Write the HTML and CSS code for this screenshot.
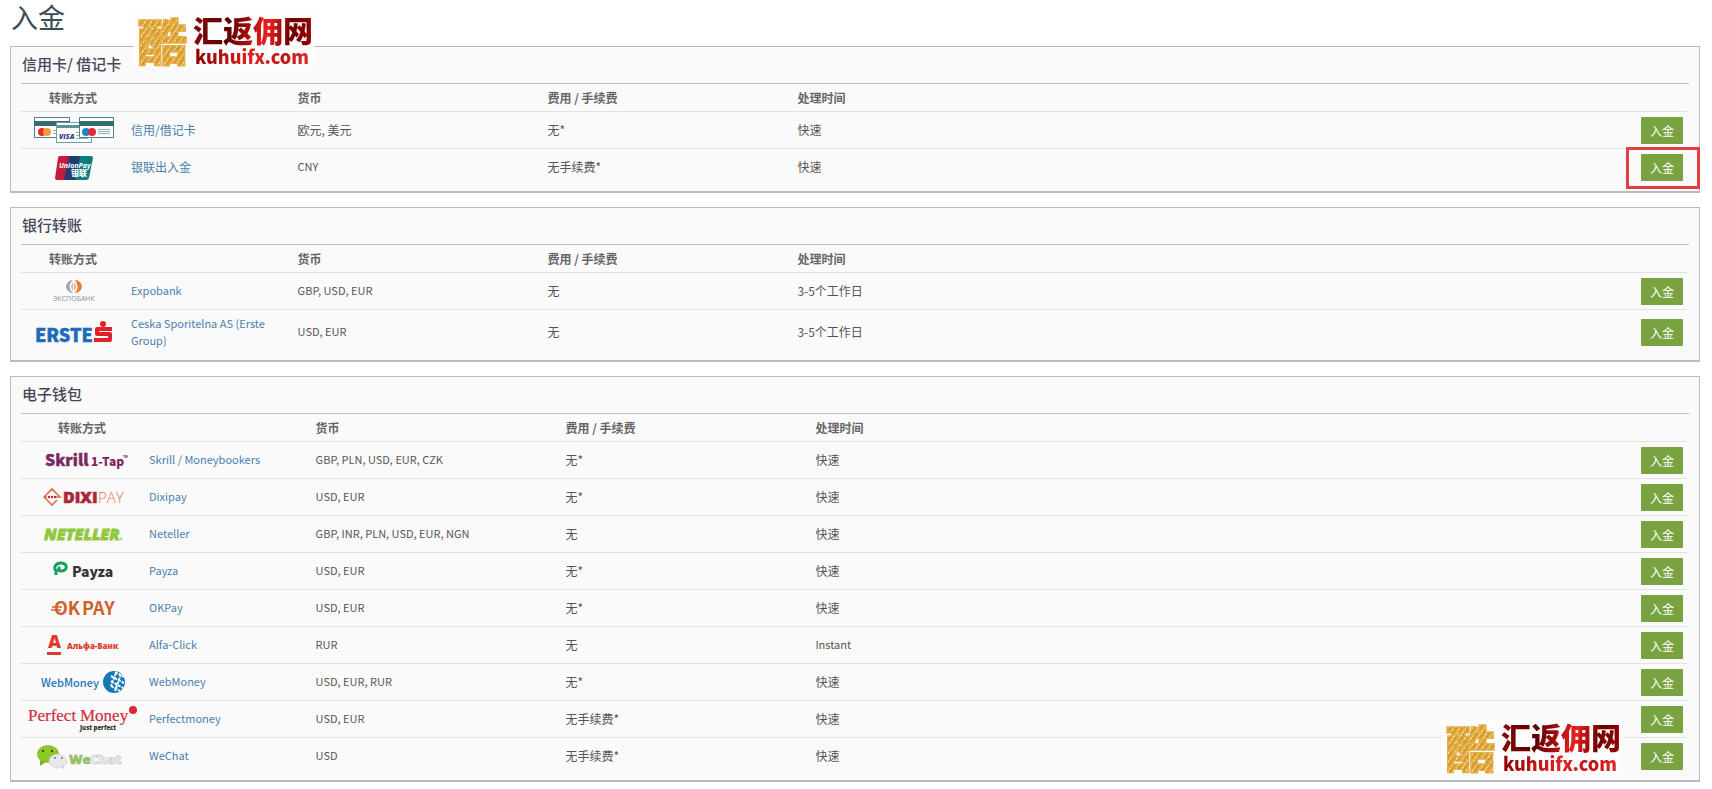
FILE: index.html
```html
<!DOCTYPE html>
<html lang="zh-CN">
<head>
<meta charset="utf-8">
<title>入金</title>
<link rel="stylesheet" href="styles.css">
</head>
<body>
<main class="page">
<h1 class="page-title">入金</h1>

<div class="brand brand-top"><span class="brand-seal">酷</span><span class="brand-words"><span class="brand-name">汇返佣网</span><span class="brand-site">kuhuifx.com</span></span></div>

<section class="panel">
<h2 class="panel-title">信用卡/ 借记卡</h2>
<table class="methods">
<thead><tr><th class="col-logo">转账方式</th><th class="col-name"></th><th class="col-mid">货币</th><th class="col-mid">费用 / 手续费</th><th>处理时间</th><th class="col-action"></th></tr></thead>
<tbody>
<tr><td class="logo"><svg width="80" height="26" viewBox="0 0 80 26"><g fill="#fff" stroke="#4c8187"><rect x=".5" y=".5" width="35" height="20"/><rect x="45.500" y=".5" width="34" height="20"/></g><path fill="#356c72" d="M0 4h36v5H0z"/><circle cx="8" cy="15" r="4" fill="#e62b26"/><circle cx="13" cy="15" r="4" fill="#f59a36"/><path stroke="#8cb0b5" d="M19 13.500h4M19 16.500h3"/><rect x="22.500" y="5.500" width="35" height="20" fill="#fff" stroke="#6fa0a6"/><path fill="#5d9299" d="M23 8h34v3H23z"/><text x="25" y="22" font-family="Open Sans" font-size="7" font-weight="800" font-style="italic" fill="#283d80">VISA</text><path stroke="#8cb0b5" d="M42 15.500h4M42 18.500h4M42 21.500h12"/><path fill="#fff" stroke="#4c8187" d="M45.500.5h34v20h-34z"/><path fill="#356c72" d="M45 4h35v5H45z"/><path stroke="#8cb0b5" d="M64 12.500h12M64 14.500h12M64 16.500h12"/><circle cx="52" cy="15" r="4" fill="#1689c9"/><circle cx="58" cy="15" r="4" fill="#e02b30"/></svg></td><td><a href="#">信用/借记卡</a></td><td>欧元, 美元</td><td>无*</td><td>快速</td><td class="action"><button class="btn">入金</button></td></tr>
<tr><td class="logo"><svg width="40" height="26" viewBox="0 0 40 26"><path fill="#c51b3d" d="M6 1h10l-5 24H3q-2 0-2-2L4 3q0-2 2-2z"/><path fill="#213d72" d="M15 1h12l-5 24H10z"/><path fill="#0c7c7d" d="M26 1h11q2 0 2 2l-4 20q-1 2-3 2H21z"/><text x="5" y="13" font-family="Open Sans" font-size="7" font-weight="700" font-style="italic" fill="#fff">UnionPay</text><text x="17" y="21" font-family="Noto Sans CJK SC" font-size="8" font-weight="900" fill="#fff">银联</text></svg></td><td><a href="#">银联出入金</a></td><td class="latin">CNY</td><td>无手续费*</td><td>快速</td><td class="action"><button class="btn btn-marked">入金</button></td></tr>
</tbody>
</table>
</section>

<section class="panel">
<h2 class="panel-title">银行转账</h2>
<table class="methods">
<thead><tr><th class="col-logo">转账方式</th><th class="col-name"></th><th class="col-mid">货币</th><th class="col-mid">费用 / 手续费</th><th>处理时间</th><th class="col-action"></th></tr></thead>
<tbody>
<tr><td class="logo"><svg width="46" height="24" viewBox="0 0 46 24"><path fill="#a4a4ac" d="M22 1a7 6.500 0 0 0 0 13l-1-1a4 6 0 0 1 0-11z"/><path fill="#c4c4c8" d="M22 3q-4 5 0 9z"/><path fill="#e5803c" d="M24 1a7 6.500 0 0 1 0 13q5-6 0-13z"/><path fill="#f3ad75" d="M23 3q4 5 0 9z"/><text x="2" y="22" font-family="Open Sans" font-size="7" fill="#8d8d92">ЭКСПОБАНК</text></svg></td><td class="latin"><a href="#">Expobank</a></td><td class="latin">GBP, USD, EUR</td><td>无</td><td>3-5个工作日</td><td class="action"><button class="btn">入金</button></td></tr>
<tr class="tall"><td class="logo"><svg width="78" height="26" viewBox="0 0 78 26"><text x="0" y="22" font-family="Noto Sans CJK SC" font-size="18" font-weight="900" fill="#1f6bb8" stroke="#1f6bb8" stroke-width=".5">ERSTE</text><g fill="none" stroke="#e42129" stroke-width="4" stroke-linejoin="round"><path d="M77 9H62v5h13v6H59"/></g><circle cx="68" cy="4" r="3" fill="#e42129"/></svg></td><td class="latin"><a href="#">Ceska Sporitelna AS (Erste Group)</a></td><td class="latin">USD, EUR</td><td>无</td><td>3-5个工作日</td><td class="action"><button class="btn">入金</button></td></tr>
</tbody>
</table>
</section>

<section class="panel">
<h2 class="panel-title">电子钱包</h2>
<table class="methods wallets">
<thead><tr><th class="col-logo">转账方式</th><th class="col-name"></th><th class="col-mid">货币</th><th class="col-mid">费用 / 手续费</th><th>处理时间</th><th class="col-action"></th></tr></thead>
<tbody>
<tr><td class="logo"><svg width="90" height="24" viewBox="0 0 90 24"><g font-family="Noto Sans CJK SC" font-weight="900" fill="#7d2663"><text x="7" y="18" font-size="16" stroke="#7d2663" stroke-width=".4">Skrill</text><text x="53" y="18" font-size="12">1-Tap</text><text x="85" y="10" font-size="3">TM</text></g></svg></td><td class="latin"><a href="#">Skrill / Moneybookers</a></td><td class="latin">GBP, PLN, USD, EUR, CZK</td><td>无*</td><td>快速</td><td class="action"><button class="btn">入金</button></td></tr>
<tr><td class="logo"><svg width="82" height="24" viewBox="0 0 82 24"><path fill="none" stroke="#dd7048" stroke-width="1.600" d="M5 9l5-5 5 5M5 15l5 5 5-5M5 9l-3 3 3 3M15 9l3 3H14M2 12h3"/><g fill="#b12b43"><circle cx="7" cy="12" r="1.200"/><circle cx="10" cy="12" r="1.200"/><circle cx="13" cy="12" r="1.200"/></g><text x="21" y="18" font-family="Open Sans" font-size="16" font-weight="800" fill="#a9283a" stroke="#a9283a" stroke-width=".6">DIXI</text><text x="56" y="18" font-family="Open Sans" font-size="15" font-weight="300" fill="#dd7c54">PAY</text></svg></td><td class="latin"><a href="#">Dixipay</a></td><td class="latin">USD, EUR</td><td>无*</td><td>快速</td><td class="action"><button class="btn">入金</button></td></tr>
<tr><td class="logo"><svg width="82" height="24" viewBox="0 0 82 24"><text x="2" y="18" font-family="Open Sans" font-size="16" font-weight="800" font-style="italic" fill="#91c83e" stroke="#91c83e" stroke-width=".8">NETELLER</text><circle cx="79" cy="17" r="1" fill="none" stroke="#91c83e" stroke-width=".8"/></svg></td><td class="latin"><a href="#">Neteller</a></td><td class="latin">GBP, INR, PLN, USD, EUR, NGN</td><td>无</td><td>快速</td><td class="action"><button class="btn">入金</button></td></tr>
<tr><td class="logo"><svg width="62" height="24" viewBox="0 0 62 24"><path fill="none" stroke="#14a05c" stroke-width="3" d="M4 16V12C1 8 4 4 9 4c7 0 7 8 0 8-3 0-3-2-1-4"/><text x="20" y="18" font-family="Noto Sans CJK SC" font-size="14" font-weight="900" fill="#333">Payza</text></svg></td><td class="latin"><a href="#">Payza</a></td><td class="latin">USD, EUR</td><td>无*</td><td>快速</td><td class="action"><button class="btn">入金</button></td></tr>
<tr><td class="logo"><svg width="66" height="24" viewBox="0 0 66 24"><g font-family="Noto Sans CJK SC" font-size="18" font-weight="700" fill="#d2602c"><text x="4" y="19">OK</text><text x="32" y="19">PAY</text></g><path stroke="#d2602c" stroke-width="1.500" d="M2 11h10M1 14h10"/></svg></td><td class="latin"><a href="#">OKPay</a></td><td class="latin">USD, EUR</td><td>无*</td><td>快速</td><td class="action"><button class="btn">入金</button></td></tr>
<tr><td class="logo"><svg width="72" height="24" viewBox="0 0 72 24"><g font-family="Open Sans" fill="#df3b32"><text x="1" y="15" font-size="18" font-weight="800">A</text><text x="20" y="16" font-size="8" font-weight="800">Альфа-Банк</text><path d="M0 19h14v3H0z"/></g></svg></td><td class="latin"><a href="#">Alfa-Click</a></td><td class="latin">RUR</td><td>无</td><td class="latin">Instant</td><td class="action"><button class="btn">入金</button></td></tr>
<tr><td class="logo"><svg width="84" height="24" viewBox="0 0 84 24"><text x="0" y="17" font-family="Noto Sans CJK SC" font-size="11" font-weight="500" fill="#1d76b5">WebMoney</text><circle cx="73" cy="12" r="11" fill="#1677b4"/><path fill="none" stroke="#fff" stroke-width="2" stroke-dasharray="3 1" d="M74 2l9 5M70 6l13 7M70 11l12 7M70 16l9 5M75 3l-5 13M80 4l-6 17"/></svg></td><td class="latin"><a href="#">WebMoney</a></td><td class="latin">USD, EUR, RUR</td><td>无*</td><td>快速</td><td class="action"><button class="btn">入金</button></td></tr>
<tr><td class="logo"><svg width="110" height="28" viewBox="0 0 110 28"><g font-family="Liberation Serif" font-size="17" fill="#cf2f3b" stroke="#cf2f3b" stroke-width=".2"><text x="0" y="16">Perfect</text><text x="52" y="16">Money</text></g><circle cx="105" cy="5" r="4" fill="#db2634"/><text x="52" y="25" font-family="Open Sans" font-size="6" font-weight="800" fill="#333">Just perfect</text></svg></td><td class="latin"><a href="#">Perfectmoney</a></td><td class="latin">USD, EUR</td><td>无手续费*</td><td>快速</td><td class="action"><button class="btn">入金</button></td></tr>
<tr><td class="logo"><svg width="94" height="26" viewBox="0 0 94 26"><ellipse cx="12" cy="10" rx="11" ry="9" fill="#8cc629"/><path fill="#7db420" d="M4 16l0 6 6-4z"/><circle cx="7" cy="7" r="1.200" fill="#394f16"/><circle cx="16" cy="7" r="1.200" fill="#394f16"/><ellipse cx="22" cy="17" rx="9" ry="7" fill="#e7e8ea" stroke="#ccc" stroke-width=".5"/><path fill="#d2d4d6" d="M25 22l3 4v-5z"/><circle cx="19" cy="14" r="1" fill="#777"/><circle cx="26" cy="14" r="1" fill="#777"/><g font-family="Open Sans" font-size="13" font-weight="800"><text x="33" y="20" fill="#9cc66a" stroke="#85ae58" stroke-width=".5">We</text><text x="54" y="20" fill="#f2f2f2" stroke="#bbb" stroke-width=".6">Chat</text></g></svg></td><td class="latin"><a href="#">WeChat</a></td><td class="latin">USD</td><td>无手续费*</td><td>快速</td><td class="action"><button class="btn">入金</button></td></tr>
</tbody>
</table>
</section>

<div class="brand brand-bottom"><span class="brand-seal">酷</span><span class="brand-words"><span class="brand-name">汇返佣网</span><span class="brand-site">kuhuifx.com</span></span></div>
</main>
</body>
</html>
```
FILE: styles.css
```css
* { box-sizing: border-box; }
body { margin: 0; background: #fff; color: #555; font: 12px/17px "Noto Sans CJK SC", sans-serif; }
.page { position: relative; padding: 0 12px 7px 10px; }
.page-title { margin: 0; padding: 2px 0 0 1px; height: 46px; font-size: 27px; line-height: 30px; font-weight: 400; color: #3d4a57; }
.panel { margin-bottom: 14px; padding: 0 10px 5px; background: #fafafa; border: 1px solid #bbb; border-bottom-width: 2px; }
.panel:last-of-type { margin-bottom: 0; }
.panel-title { margin: 0; height: 37px; padding-left: 1px; border-bottom: 1px solid #bbb; font-size: 15px; line-height: 33px; font-weight: 500; color: #45475a; }
.methods { width: calc(100% - 2px); table-layout: fixed; border-collapse: separate; border-spacing: 0; }
.methods th, .methods td { padding: 0 6px 0 4px; text-align: left; vertical-align: middle; border-bottom: 1px solid #e2e2e2; }
.methods th { height: 28px; font-size: 12px; font-weight: 700; color: #666; }
.methods td { height: 37px; padding-bottom: 2px; }
.methods .tall td { height: 45px; }
.methods .latin { font-size: 11px; }
.methods tbody tr:last-child td { border-bottom: 0; }
.methods .col-logo { width: 106px; text-align: center; }
.wallets .col-logo { width: 124px; }
.col-name { width: 10%; }
.col-mid { width: 15%; }
.col-action { width: 60px; }
.methods .logo { text-align: center; padding: 0 5px; }
.logo svg { display: block; margin: 0 auto; }
.methods a { color: #4a7fae; text-decoration: none; }
.methods .action { text-align: right; padding: 0 4px 0 0; }
.btn { position: relative; width: 42px; height: 27px; padding: 1px 0 0; border: 0; border-radius: 1px; background: #79a240; color: #fff; font: 12px/26px "Noto Sans CJK SC", sans-serif; vertical-align: middle; }
.btn-marked::after { content: ""; position: absolute; inset: -7px -17px -8px -15px; border: 3px solid #e23f44; }
.brand { position: absolute; display: flex; gap: 6px; padding: 0 1px 0 3px; background: #fdfdfd; }
.brand-top { left: 134px; top: 12px; }
.brand-bottom { right: 90px; bottom: 16px; }
.brand-seal { font-size: 50px; line-height: 54px; font-weight: 900; color: transparent; background: repeating-linear-gradient(125deg, #e0a83c 0 2px, #f3d58b 2px 3px, #d99a2b 3px 5px); background-clip: text; -webkit-text-stroke: 1px #e3b04a; }
.brand-words { display: flex; flex-direction: column; }
.brand-name { font-size: 30px; line-height: 34px; font-weight: 900; color: transparent; background: linear-gradient(100deg, #8d0a0a, #5b0000 30%, #a00c0c 45%, #ee2020 62%, #700000 80%, #900); background-clip: text; }
.brand-site { padding-left: 2px; font-size: 18px; line-height: 20px; font-weight: 900; color: transparent; background: linear-gradient(100deg, #800, #e32222 50%, #c01515 75%, #f02a2a); background-clip: text; }
```
